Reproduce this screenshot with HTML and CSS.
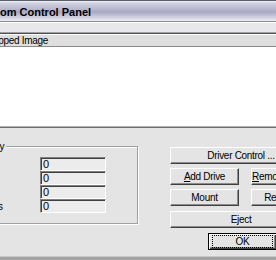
FILE: index.html
```html
<!DOCTYPE html>
<html lang="en">
<head>
  <meta charset="UTF-8">
  <title>CDrom Control Panel</title>
  <link rel="stylesheet" href="styles.css">
</head>
<body>
  <div class="window">
    <div class="titlebar">om Control Panel</div>
    <div class="menubar"></div>

    <!-- elenco delle immagini montate -->
    <div class="list">
      <div class="list-header">Mapped Image</div>
      <div class="list-body"></div>
    </div>

    <div class="panel">
      <fieldset class="group">
        <legend>Memory</legend>
        <div class="row"><span class="label">Total</span><span class="field">0</span></div>
        <div class="row"><span class="label">Used</span><span class="field">0</span></div>
        <div class="row"><span class="label">Free</span><span class="field">0</span></div>
        <div class="row"><span class="label">Sectors</span><span class="field">0</span></div>
      </fieldset>

      <div class="buttons">
        <button class="btn">Driver Control ...</button>
        <div class="pair">
          <button class="btn"><u>A</u>dd Drive</button>
          <button class="btn"><u>R</u>emove Drive</button>
        </div>
        <div class="pair">
          <button class="btn">Mount</button>
          <button class="btn">Release</button>
        </div>
        <button class="btn eject">Eject</button>
        <button class="btn ok"><span class="focus">OK</span></button>
      </div>
    </div>
  </div>
</body>
</html>
```

FILE: styles.css
```css
body {
  margin: 0;
  width: 276px;
  height: 260px;
  overflow: hidden;
  background-color: #a4a4a4;
  font-family: "Liberation Sans", Arial, sans-serif;
  font-size: 10px;
  letter-spacing: -0.3px;
  color: #000;
}
/* la finestra esce dai bordi a sinistra e a destra */
.window {
  width: 382px;
  margin-left: -60px;
  background-color: #e4e4e4;
  border-bottom: 1px solid #c8c8c8;
}
.titlebar {
  height: 18px;
  padding: 2px 0 0 60px;
  line-height: 18px;
  border-top: 1px solid #5c5c6c;
  background: linear-gradient(to bottom, #f2f2f8 0, #d2d2e2 2px, #b8b8d0 40%, #a8a8c6 55%, #d4d4e2 85%, #ececf2 100%);
  font-size: 11px;
  font-weight: bold;
  letter-spacing: 0;
}
.menubar {
  height: 10px;
  border-top: 1px solid #8c8c94;
  border-bottom: 1px solid #a0a0a0;
  background-color: #e8e8ec;
  box-shadow: inset 0 1px #fff;
}
.list {
  border-top: 1px solid #505050;
}
.list-header {
  height: 12px;
  padding-left: 45px;
  line-height: 14px;
  background-color: #dedede;
  border-bottom: 1px solid #8a8a8a;
  box-shadow: inset 0 1px #fff;
}
.list-body {
  height: 79px;
  background-color: #fff;
  border-bottom: 1px solid #b4b4b4;
}
.panel {
  display: flex;
  align-items: flex-start;
  height: 128px;
  padding-left: 15px;
  border-top: 1px solid #6c6c6c;
}
/* riquadro con i contatori */
.group {
  box-sizing: border-box;
  width: 183px;
  min-width: 0;
  margin: 13px 0 0;
  padding: 5px 0 10px 9px;
  border: 1px solid #a0a0a0;
  box-shadow: inset 1px 1px #fff, 1px 1px #fff;
}
.group legend {
  padding: 0 2px;
  margin-left: 3px;
  line-height: 11px;
  background-color: #e4e4e4;
}
.row {
  display: flex;
  align-items: center;
  height: 14px;
}
.label {
  width: 69px;
  padding-left: 6px;
}
.field {
  box-sizing: border-box;
  width: 66px;
  height: 14px;
  padding-left: 2px;
  font-size: 11px;
  line-height: 12px;
  letter-spacing: 0;
  background-color: #ececec;
  border: 1px solid;
  border-color: #808080 #fff #fff #808080;
  box-shadow: inset 1px 1px #404040;
}
/* colonna dei bottoni */
.buttons {
  display: flex;
  flex-direction: column;
  gap: 4px;
  width: 142px;
  margin: 19px 0 0 32px;
}
.pair {
  display: flex;
  justify-content: space-between;
}
.pair .btn {
  width: 69px;
}
.pair .btn + .btn {
  width: 61px;
}
.btn {
  box-sizing: border-box;
  height: 17px;
  padding: 0;
  font: inherit;
  letter-spacing: inherit;
  line-height: 14px;
  white-space: nowrap;
  color: #000;
  background-color: #e4e4e4;
  border: 1px solid;
  border-color: #fff #404040 #404040 #fff;
  box-shadow: inset -1px -1px #8c8c8c;
}
.eject {
  margin-top: 1px;
}
.ok {
  width: 69px;
  margin: 1px 0 0 38px;
  border-color: #000;
  box-shadow: inset 1px 1px #fff, inset -1px -1px #404040, inset -2px -2px #8c8c8c;
}
.focus {
  display: block;
  margin: 1px 3px;
  line-height: 11px;
  border: 1px dotted #000;
}
```
